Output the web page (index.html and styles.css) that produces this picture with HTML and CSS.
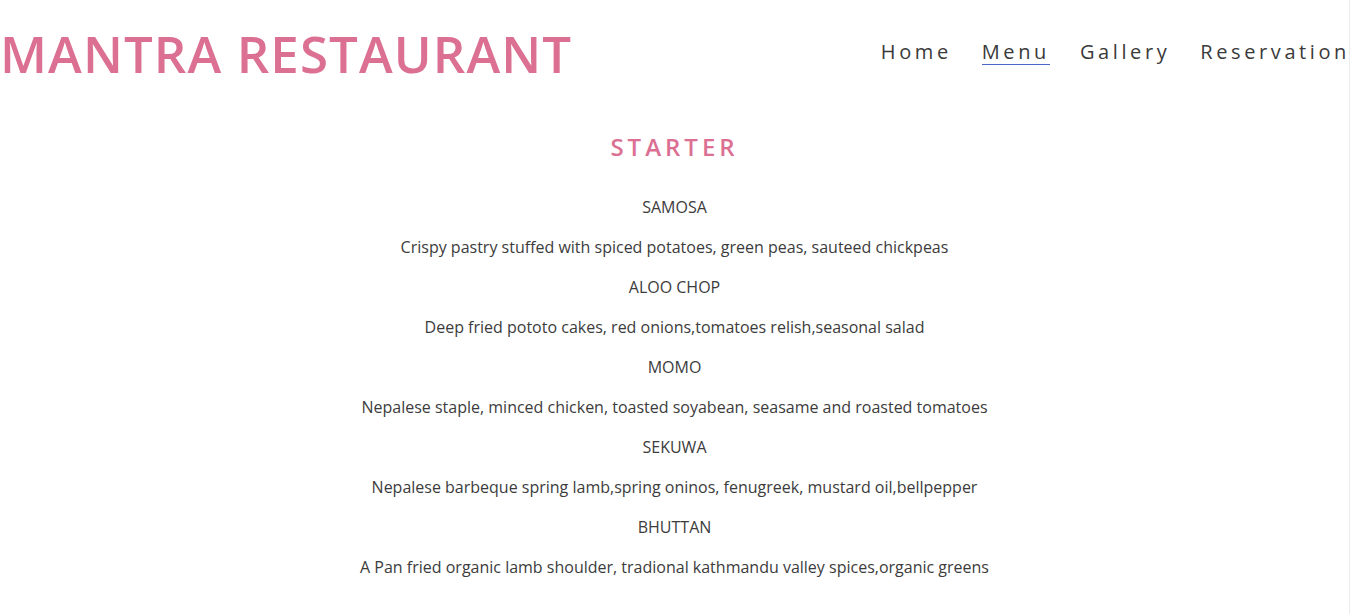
FILE: index.html
```html
<!DOCTYPE html>
<html>
<head>
<meta charset="utf-8">
<title>Mantra Restaurant</title>
<link rel="stylesheet" href="styles.css">
</head>
<body>
<div class="page">
  <header class="header">
    <h1 class="brand">MANTRA RESTAURANT</h1>
    <nav class="nav">
      <a class="nav-link" href="#">Home</a>
      <a class="nav-link active" href="#">Menu</a>
      <a class="nav-link" href="#">Gallery</a>
      <a class="nav-link" href="#">Reservation</a>
    </nav>
  </header>
  <main class="menu">
    <h2 class="section-title">STARTER</h2>
    <p class="item">SAMOSA</p>
    <p class="desc">Crispy pastry stuffed with spiced potatoes, green peas, sauteed chickpeas</p>
    <p class="item">ALOO CHOP</p>
    <p class="desc">Deep fried pototo cakes, red onions,tomatoes relish,seasonal salad</p>
    <p class="item">MOMO</p>
    <p class="desc">Nepalese staple, minced chicken, toasted soyabean, seasame and roasted tomatoes</p>
    <p class="item">SEKUWA</p>
    <p class="desc">Nepalese barbeque spring lamb,spring oninos, fenugreek, mustard oil,bellpepper</p>
    <p class="item">BHUTTAN</p>
    <p class="desc">A Pan fried organic lamb shoulder, tradional kathmandu valley spices,organic greens</p>
  </main>
</div>
</body>
</html>
```

FILE: styles.css
```css
html, body {
  margin: 0;
  padding: 0;
  background: #ffffff;
}
body {
  font-family: "Open Sans", "Liberation Sans", sans-serif;
  color: #3c3c3c;
}
.page {
  width: 1350px;
  min-height: 614px;
  box-sizing: border-box;
  border-right: 1px solid #ececec;
  overflow: hidden;
}
.header {
  display: flex;
  justify-content: space-between;
  align-items: center;
  height: 104px;
}
.brand {
  margin: 0;
  font-size: 51px;
  font-weight: 600;
  letter-spacing: 1.1px;
  color: #db7093;
  line-height: 1;
  padding-top: 2px;
}
.nav {
  display: flex;
  gap: 30px;
  margin-right: -1px;
}
.nav-link {
  font-size: 20px;
  letter-spacing: 3.6px;
  color: #3a3a3a;
  text-decoration: none;
  line-height: 25px;
  border-bottom: 1px solid transparent;
}
.nav-link.active {
  border-bottom-color: #4a66c9;
}
.menu {
  text-align: center;
  padding-top: 27px;
}
.section-title {
  margin: 0 0 32px;
  font-size: 24px;
  font-weight: 600;
  letter-spacing: 4px;
  color: #db7093;
  line-height: 32px;
}
.menu p {
  margin: 16px 0;
  font-size: 16px;
  line-height: 24px;
  color: #3c3c3c;
}
```
